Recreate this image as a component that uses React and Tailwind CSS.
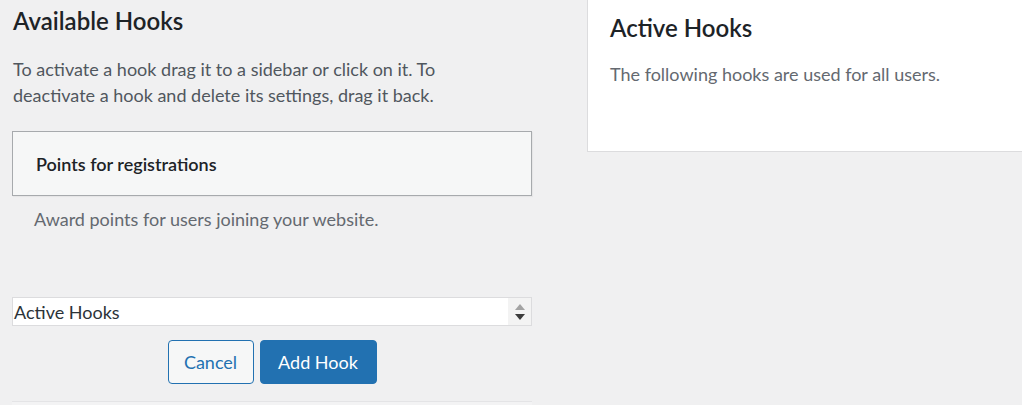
export default function App() {
  const font = { fontFamily: "Lato, 'Open Sans', sans-serif" };
  return (
    <div
      className="w-[1022px] h-[405px] bg-[#f0f0f1] flex items-start overflow-hidden"
      style={font}
    >
      <div className="w-[520px] ml-[12px] flex flex-col shrink-0">
        <h2 className="mt-[5px] pl-[1px] text-[24px] leading-[32px] font-semibold text-[#1d2327]">
          Available Hooks
        </h2>
        <p className="mt-[19px] pl-[1px] text-[18px] leading-[26px] text-[#50575e]">
          To activate a hook drag it to a sidebar or click on it. To
          <br />
          deactivate a hook and delete its settings, drag it back.
        </p>
        <div className="mt-[23px] h-[65px] border border-[#a7aaad] bg-[#f6f7f7] flex items-center pl-[23px] shadow-[1px_1px_1px_rgba(0,0,0,0.04)]">
          <span className="text-[18px] leading-[26px] font-semibold text-[#1d2327]">
            Points for registrations
          </span>
        </div>
        <p className="mt-[10px] pl-[22px] text-[18px] leading-[26px] text-[#646970]">
          Award points for users joining your website.
        </p>
        <div className="mt-[65px] h-[29px] border border-[#dcdcde] bg-white flex items-center">
          <span className="flex-1 pl-[1px] text-[18px] leading-[26px] text-[#2c3338]">
            Active Hooks
          </span>
          <div className="w-[23px] h-full bg-[#f3f3f3] flex flex-col items-center justify-center gap-[4px]">
            <svg width="10" height="6" viewBox="0 0 10 6">
              <polygon points="5,0 10,6 0,6" fill="#a3a3a3" />
            </svg>
            <svg width="10" height="6" viewBox="0 0 10 6">
              <polygon points="0,0 10,0 5,6" fill="#3c3c3c" />
            </svg>
          </div>
        </div>
        <div className="mt-[14px] flex justify-center gap-[6px]">
          <button className="w-[86px] h-[44px] rounded-[4px] border border-[#2271b1] bg-[#f6f7f7] text-[#2271b1] text-[18px] leading-[26px]">
            Cancel
          </button>
          <button className="w-[117px] h-[44px] rounded-[4px] border border-[#2271b1] bg-[#2271b1] text-white text-[18px] leading-[26px]">
            Add Hook
          </button>
        </div>
        <div className="mt-[17px] h-[20px] border-t border-[#e4e4e6] bg-[#f3f3f4]" />
      </div>
      <div className="ml-[55px] flex-1 h-[152px] bg-white border-l border-b border-[#dcdcde] pl-[22px]">
        <h2 className="mt-[12px] text-[24px] leading-[32px] font-semibold text-[#1d2327]">
          Active Hooks
        </h2>
        <p className="mt-[17px] text-[18px] leading-[26px] text-[#646970]">
          The following hooks are used for all users.
        </p>
      </div>
    </div>
  );
}
